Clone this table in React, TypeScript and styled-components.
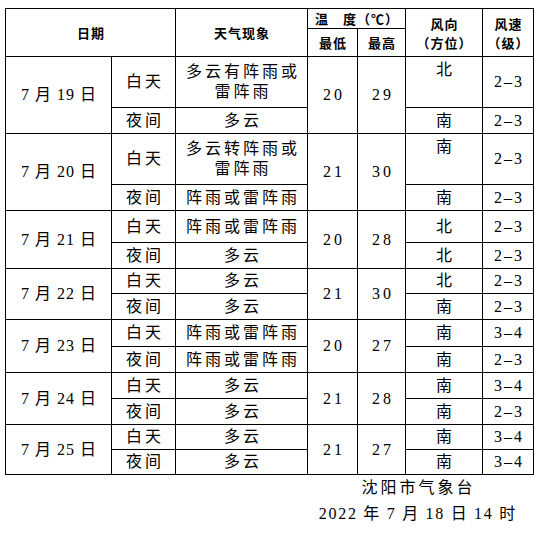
import React from "react";
import styled, { createGlobalStyle } from "styled-components";

interface DayForecast {
  date: string;
  heights: [number, number];
  dayWeather: React.ReactNode;
  nightWeather: React.ReactNode;
  low: string;
  high: string;
  dayDir: string;
  nightDir: string;
  dirTop?: boolean;
  daySpeed: string;
  nightSpeed: string;
}

const days: DayForecast[] = [
  {
    date: "7 月 19 日",
    heights: [51, 26],
    dayWeather: (
      <>
        多云有阵雨或
        <br />
        雷阵雨
      </>
    ),
    nightWeather: "多云",
    low: "20",
    high: "29",
    dayDir: "北",
    nightDir: "南",
    dirTop: true,
    daySpeed: "2–3",
    nightSpeed: "2–3",
  },
  {
    date: "7 月 20 日",
    heights: [51, 26],
    dayWeather: (
      <>
        多云转阵雨或
        <br />
        雷阵雨
      </>
    ),
    nightWeather: "阵雨或雷阵雨",
    low: "21",
    high: "30",
    dayDir: "南",
    nightDir: "南",
    dirTop: true,
    daySpeed: "2–3",
    nightSpeed: "2–3",
  },
  {
    date: "7 月 21 日",
    heights: [32, 26],
    dayWeather: "阵雨或雷阵雨",
    nightWeather: "多云",
    low: "20",
    high: "28",
    dayDir: "北",
    nightDir: "北",
    daySpeed: "2–3",
    nightSpeed: "2–3",
  },
  {
    date: "7 月 22 日",
    heights: [25, 26],
    dayWeather: "多云",
    nightWeather: "多云",
    low: "21",
    high: "30",
    dayDir: "北",
    nightDir: "南",
    daySpeed: "2–3",
    nightSpeed: "2–3",
  },
  {
    date: "7 月 23 日",
    heights: [27, 26],
    dayWeather: "阵雨或雷阵雨",
    nightWeather: "阵雨或雷阵雨",
    low: "20",
    high: "27",
    dayDir: "南",
    nightDir: "南",
    daySpeed: "3–4",
    nightSpeed: "2–3",
  },
  {
    date: "7 月 24 日",
    heights: [26, 26],
    dayWeather: "多云",
    nightWeather: "多云",
    low: "21",
    high: "28",
    dayDir: "南",
    nightDir: "南",
    daySpeed: "3–4",
    nightSpeed: "2–3",
  },
  {
    date: "7 月 25 日",
    heights: [25, 25],
    dayWeather: "多云",
    nightWeather: "多云",
    low: "21",
    high: "27",
    dayDir: "南",
    nightDir: "南",
    daySpeed: "3–4",
    nightSpeed: "3–4",
  },
];

const GlobalStyle = createGlobalStyle`
  body {
    margin: 0;
    background: #fff;
    color: #000;
    font-family: "Liberation Serif", "Noto Sans CJK SC", serif;
  }
`;

const Page = styled.div`
  padding: 8px 0 0 5px;
`;

const Grid = styled.div<{ $rows: string }>`
  display: grid;
  grid-template-columns: 106px 64px 132px 50px 48px 77px 51px;
  grid-template-rows: ${(props) => props.$rows};
  width: max-content;
  border-top: 1px solid #000;
  border-left: 1px solid #000;
`;

interface CellProps {
  $rowSpan?: number;
  $colSpan?: number;
  $top?: boolean;
  $ls?: number;
}

const Cell = styled.div<CellProps>`
  grid-row: span ${(props) => props.$rowSpan ?? 1};
  grid-column: span ${(props) => props.$colSpan ?? 1};
  box-sizing: border-box;
  border-right: 1px solid #000;
  border-bottom: 1px solid #000;
  display: flex;
  align-items: ${(props) => (props.$top ? "flex-start" : "center")};
  justify-content: center;
  text-align: center;
  padding-top: ${(props) => (props.$top ? "3px" : "0")};
  padding-left: ${(props) => props.$ls ?? 3}px;
  font-size: 16px;
  line-height: 20px;
  letter-spacing: ${(props) => props.$ls ?? 3}px;
  white-space: nowrap;
  overflow: hidden;
`;

const HeadCell = styled(Cell)`
  font-family: "Noto Sans CJK SC", sans-serif;
  font-weight: 700;
  font-size: 13px;
  line-height: 19px;
`;

const Footer = styled.div`
  width: 200px;
  margin-left: 312px;
  display: flex;
  flex-direction: column;
  align-items: center;
  font-size: 16px;
  line-height: 26px;
`;

const FooterLine = styled.div<{ $ls: number }>`
  letter-spacing: ${(props) => props.$ls}px;
  padding-left: ${(props) => props.$ls}px;
  white-space: nowrap;
`;

const App: React.FunctionComponent = () => {
  const rows = ["20px", "28px"]
    .concat(days.flatMap((d) => d.heights.map((h) => `${h}px`)))
    .join(" ");

  return (
    <Page>
      <GlobalStyle />
      <Grid $rows={rows}>
        <HeadCell $rowSpan={2} $colSpan={2} $ls={1}>
          日期
        </HeadCell>
        <HeadCell $rowSpan={2} $ls={1}>
          天气现象
        </HeadCell>
        <HeadCell $colSpan={2} $ls={1}>
          温　度（℃）
        </HeadCell>
        <HeadCell $rowSpan={2} $ls={1}>
          风向
          <br />
          （方位）
        </HeadCell>
        <HeadCell $rowSpan={2} $ls={1}>
          风速
          <br />
          （级）
        </HeadCell>
        <HeadCell $ls={1}>最低</HeadCell>
        <HeadCell $ls={1}>最高</HeadCell>

        {days.map((d) => (
          <React.Fragment key={d.date}>
            <Cell $rowSpan={2} $ls={1}>
              {d.date}
            </Cell>
            <Cell>白天</Cell>
            <Cell>{d.dayWeather}</Cell>
            <Cell $rowSpan={2}>{d.low}</Cell>
            <Cell $rowSpan={2}>{d.high}</Cell>
            <Cell $top={d.dirTop}>{d.dayDir}</Cell>
            <Cell $ls={2}>{d.daySpeed}</Cell>
            <Cell>夜间</Cell>
            <Cell>{d.nightWeather}</Cell>
            <Cell>{d.nightDir}</Cell>
            <Cell $ls={2}>{d.nightSpeed}</Cell>
          </React.Fragment>
        ))}
      </Grid>
      <Footer>
        <FooterLine $ls={3}>沈阳市气象台</FooterLine>
        <FooterLine $ls={1.7}>2022 年 7 月 18 日 14 时</FooterLine>
      </Footer>
    </Page>
  );
};

export default App;
